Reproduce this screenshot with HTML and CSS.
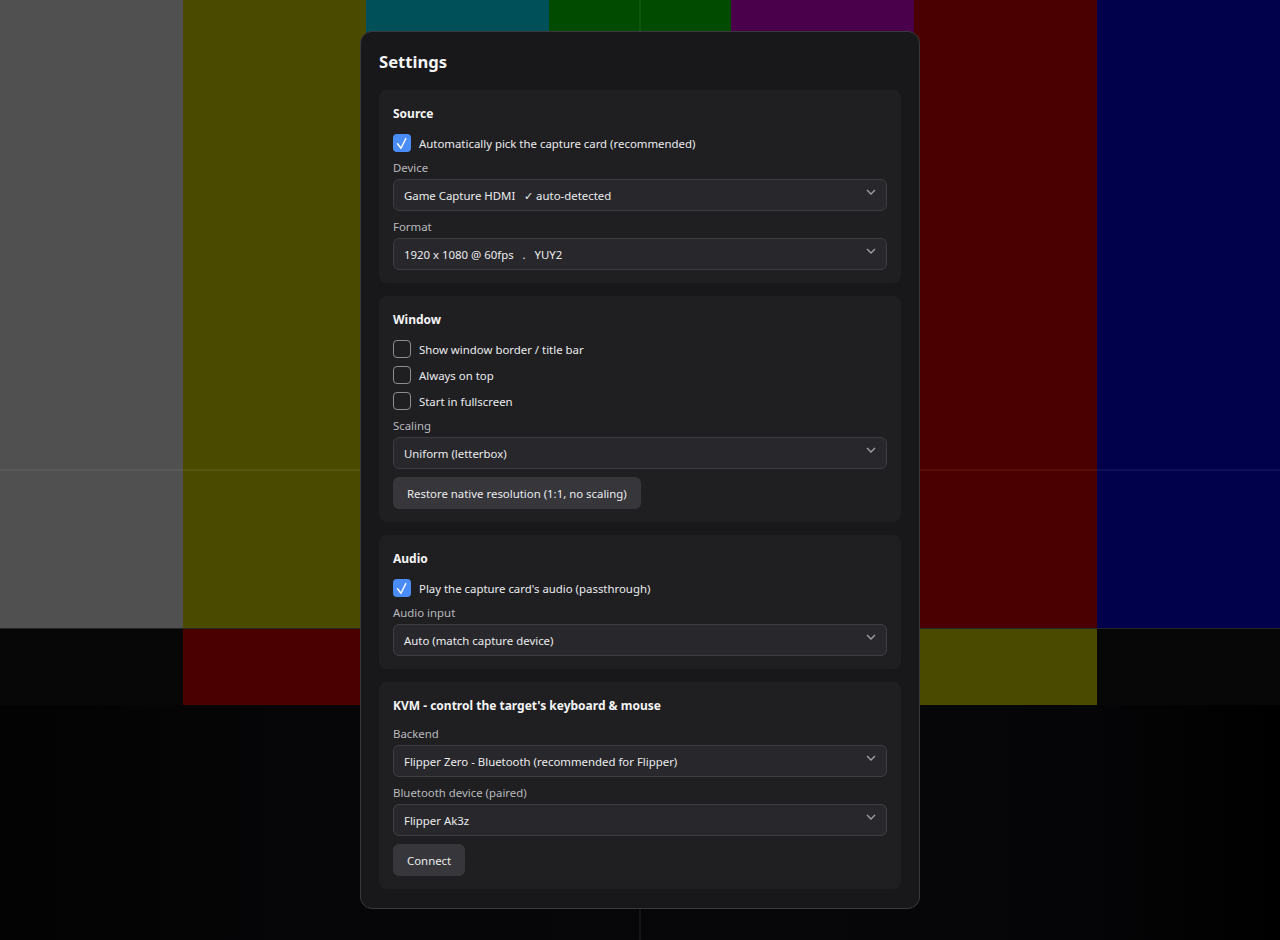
FILE: index.html
```html
<!DOCTYPE html>
<html lang="en">
<head>
    <meta charset="UTF-8">
    <meta name="viewport" content="width=device-width, initial-scale=1.0">
    <title>Settings</title>
    <link rel="stylesheet" href="styles.css">
</head>
<body>
    <div class="bars">
        <div class="bars-row bars-top">
            <div class="c-grey"></div>
            <div class="c-yellow"></div>
            <div class="c-cyan"></div>
            <div class="c-green"></div>
            <div class="c-magenta"></div>
            <div class="c-red"></div>
            <div class="c-blue"></div>
        </div>
        <div class="bars-row bars-mid">
            <div class="c-black"></div>
            <div class="c-red"></div>
            <div class="c-black"></div>
            <div class="c-green"></div>
            <div class="c-black"></div>
            <div class="c-yellow"></div>
            <div class="c-black"></div>
        </div>
        <div class="bars-low"></div>
    </div>

    <div class="dialog">
        <h1>Settings</h1>

        <section class="group">
            <h2>Source</h2>
            <label class="check">
                <span class="box on"><svg viewBox="0 0 18 18"><path d="M4.5 9.8L8 14.3L12.8 4.6"/></svg></span>
                Automatically pick the capture card (recommended)
            </label>
            <div class="field">
                <span class="field-label">Device</span>
                <div class="select">
                    <span>Game Capture HDMI&nbsp;&nbsp; ✓ auto-detected</span>
                    <svg class="chev" viewBox="0 0 10 6"><path d="M1 1l4 4 4-4"/></svg>
                </div>
            </div>
            <div class="field">
                <span class="field-label">Format</span>
                <div class="select">
                    <span>1920 x 1080 @ 60fps&nbsp;&nbsp;&nbsp;.&nbsp;&nbsp;&nbsp;YUY2</span>
                    <svg class="chev" viewBox="0 0 10 6"><path d="M1 1l4 4 4-4"/></svg>
                </div>
            </div>
        </section>

        <section class="group">
            <h2>Window</h2>
            <label class="check"><span class="box"></span>Show window border / title bar</label>
            <label class="check"><span class="box"></span>Always on top</label>
            <label class="check"><span class="box"></span>Start in fullscreen</label>
            <div class="field">
                <span class="field-label">Scaling</span>
                <div class="select">
                    <span>Uniform (letterbox)</span>
                    <svg class="chev" viewBox="0 0 10 6"><path d="M1 1l4 4 4-4"/></svg>
                </div>
            </div>
            <div><button class="btn">Restore native resolution (1:1, no scaling)</button></div>
        </section>

        <section class="group">
            <h2>Audio</h2>
            <label class="check">
                <span class="box on"><svg viewBox="0 0 18 18"><path d="M4.5 9.8L8 14.3L12.8 4.6"/></svg></span>
                Play the capture card's audio (passthrough)
            </label>
            <div class="field">
                <span class="field-label">Audio input</span>
                <div class="select">
                    <span>Auto (match capture device)</span>
                    <svg class="chev" viewBox="0 0 10 6"><path d="M1 1l4 4 4-4"/></svg>
                </div>
            </div>
        </section>

        <section class="group">
            <h2>KVM - control the target's keyboard &amp; mouse</h2>
            <div class="field">
                <span class="field-label">Backend</span>
                <div class="select">
                    <span>Flipper Zero - Bluetooth (recommended for Flipper)</span>
                    <svg class="chev" viewBox="0 0 10 6"><path d="M1 1l4 4 4-4"/></svg>
                </div>
            </div>
            <div class="field">
                <span class="field-label">Bluetooth device (paired)</span>
                <div class="select">
                    <span>Flipper Ak3z</span>
                    <svg class="chev" viewBox="0 0 10 6"><path d="M1 1l4 4 4-4"/></svg>
                </div>
            </div>
            <div><button class="btn">Connect</button></div>
        </section>
    </div>
</body>
</html>
```

FILE: styles.css
```css
* {
    box-sizing: border-box;
}
body {
    margin: 0;
    height: 100vh;
    display: flex;
    align-items: center;
    justify-content: center;
    font-family: "Noto Sans", "Open Sans", sans-serif;
    font-size: 11.4px;
    color: #ececee;
    background: #000;
    overflow: hidden;
}

/* test pattern behind the dialog */
.bars {
    position: fixed;
    inset: 0;
    display: grid;
    grid-template-rows: 629px 76px 1fr;
}
.bars::before, .bars::after {
    content: "";
    position: absolute;
    background: rgba(255, 255, 255, 0.06);
}
.bars::before {
    left: 639px;
    top: 0;
    bottom: 0;
    width: 2px;
}
.bars::after {
    left: 0;
    right: 0;
    top: 469px;
    height: 2px;
}
.bars-row {
    display: grid;
    grid-template-columns: repeat(7, 1fr);
}
.bars-top {
    border-bottom: 1px solid #262626;
}
.c-grey { background: #505050; }
.c-yellow { background: #4b4b00; }
.c-cyan { background: #00505a; }
.c-green { background: #004b00; }
.c-magenta { background: #4b004b; }
.c-red { background: #4b0000; }
.c-blue { background: #00004b; }
.c-black { background: #070707; }
.bars-low {
    background: linear-gradient(to right, #030303 0%, #060608 25%, #07070a 60%, #050507 85%, #000 100%);
}

.dialog {
    position: relative;
    width: 560px;
    padding: 18px 18px 19px;
    background: #18181b;
    border: 1px solid #3a3a3e;
    border-radius: 12px;
    display: flex;
    flex-direction: column;
    gap: 13px;
}
h1 {
    margin: 0 0 3px;
    font-size: 16.6px;
    line-height: 24px;
    font-weight: 700;
    color: #f4f4f5;
}
.group {
    background: #1f1f22;
    border-radius: 8px;
    padding: 15px 14px 13px;
    display: flex;
    flex-direction: column;
    gap: 8px;
}
h2 {
    margin: 0 0 3px;
    font-size: 12px;
    line-height: 18px;
    font-weight: 700;
    color: #f4f4f5;
}
.check {
    display: flex;
    align-items: center;
    gap: 8px;
    height: 18px;
    font-size: 11.4px;
}
.box {
    width: 18px;
    height: 18px;
    border: 1.5px solid #8c8c92;
    border-radius: 4px;
    flex: none;
}
.box.on {
    background: #4b8df8;
    border: none;
}
.box svg {
    display: block;
    width: 18px;
    height: 18px;
    fill: none;
    stroke: #fff;
    stroke-width: 1.4;
    stroke-linecap: round;
    stroke-linejoin: round;
}
.field {
    display: flex;
    flex-direction: column;
    gap: 3px;
}
.field-label {
    line-height: 16px;
    color: #b9b9be;
}
.select {
    height: 32px;
    padding: 0 10px;
    background: #28282c;
    border: 1px solid #3d3d43;
    border-radius: 6px;
    display: flex;
    align-items: center;
    justify-content: space-between;
    font-size: 11.4px;
}
.chev {
    width: 10px;
    height: 6px;
    margin-top: -6px;
    fill: none;
    stroke: #a0a0a8;
    stroke-width: 1.3;
}
.btn {
    height: 32px;
    padding: 0 14px;
    background: #36363b;
    color: #ececee;
    border: none;
    border-radius: 6px;
    font-family: inherit;
    font-size: 11.4px;
    cursor: pointer;
}
.btn:hover {
    background: #404046;
}
```
